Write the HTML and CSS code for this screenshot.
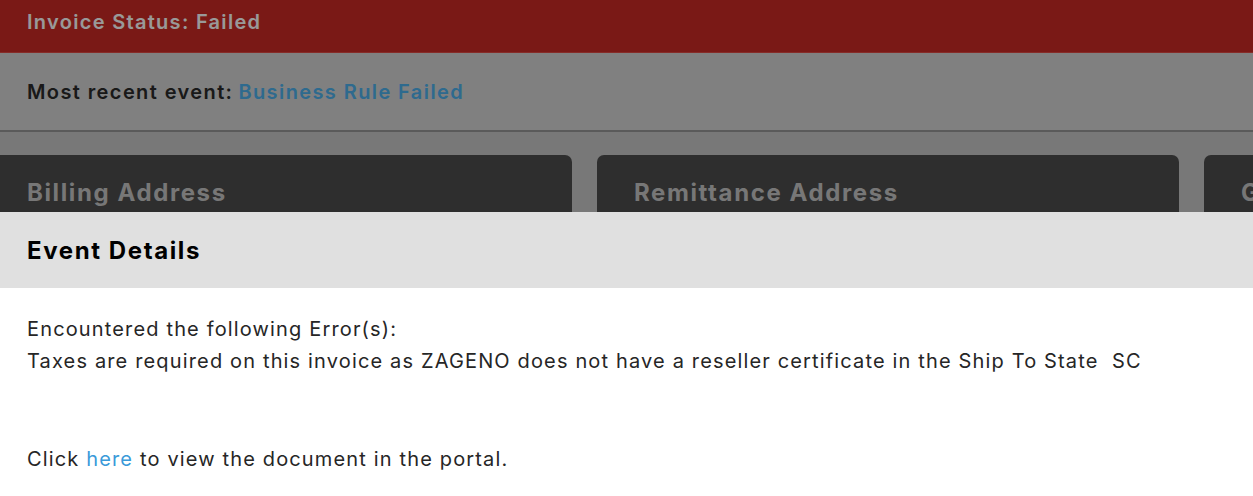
FILE: index.html
```html
<!DOCTYPE html>
<html lang="en">
<head>
<meta charset="utf-8">
<title>Invoice – Event Details</title>
<link rel="stylesheet" href="styles.css">
</head>
<body>
<div class="page">
  <header class="status-bar">Invoice Status: Failed</header>
  <section class="event-bar">
    <span class="event-label">Most recent event:</span>
    <a class="event-value" href="#">Business Rule Failed</a>
  </section>
  <section class="cards">
    <div class="card"><h2 class="card-title">Billing Address</h2></div>
    <div class="card"><h2 class="card-title">Remittance Address</h2></div>
    <div class="card"><h2 class="card-title">General</h2></div>
  </section>
</div>
<div class="backdrop"></div>
<div class="modal">
  <div class="modal-header"><h1 class="modal-title">Event Details</h1></div>
  <div class="modal-body">
    <p class="msg">Encountered the following Error(s):<br>Taxes are required on this invoice as ZAGENO does not have a reseller certificate in the Ship To State&nbsp; SC</p>
    <p class="msg link-line">Click <a class="link" href="#">here</a> to view the document in the portal.</p>
  </div>
</div>
</body>
</html>
```

FILE: styles.css
```css
* { box-sizing: border-box; }
html, body { margin: 0; padding: 0; height: 100%; overflow: hidden; }
body {
  font-family: Inter, "Open Sans", "Liberation Sans", sans-serif;
  background: #c8c8c8;
  width: 1253px;
  height: 496px;
  position: relative;
}
.page { display: flex; flex-direction: column; }
.status-bar {
  height: 53px;
  background: #cb2b25;
  border-bottom: 1px solid #e04a44;
  color: #ffffff;
  font-size: 20px;
  font-weight: 600;
  letter-spacing: 1.3px;
  line-height: 30px;
  padding: 7px 27px 0;
}
.event-bar {
  height: 79px;
  background: #d5d5d5;
  border-bottom: 2px solid #969696;
  display: flex;
  align-items: center;
  gap: 5px;
  padding: 0 27px;
  font-size: 20px;
  font-weight: 600;
  letter-spacing: 1.4px;
}
.event-label { color: #2b2b2b; }
.event-value { color: #4db1ed; text-decoration: none; }
.cards {
  display: flex;
  gap: 25px;
  margin: 23px 0 0 -10px;
}
.card {
  flex: 0 0 582px;
  height: 120px;
  background: #4d4d4d;
  border-radius: 7px;
  padding: 22px 37px 0;
  overflow: hidden;
}
.card-title {
  margin: 0;
  color: #c7c7c7;
  font-size: 24px;
  font-weight: 700;
  letter-spacing: 1.6px;
  line-height: 32px;
  white-space: nowrap;
}
.backdrop {
  position: absolute;
  inset: 0;
  background: rgba(0, 0, 0, 0.4);
}
.modal {
  position: absolute;
  top: 212px;
  left: 0;
  right: 0;
  bottom: 0;
  background: #ffffff;
  display: flex;
  flex-direction: column;
}
.modal-header {
  height: 76px;
  background: #e0e0e0;
  display: flex;
  align-items: center;
  padding: 0 27px;
}
.modal-title {
  margin: 0;
  font-size: 24px;
  font-weight: 700;
  letter-spacing: 1.6px;
  color: #000;
}
.modal-body { padding: 25px 27px 0; }
.msg {
  margin: 0;
  font-size: 20px;
  letter-spacing: 1.15px;
  line-height: 32px;
  color: #262626;
}
.link-line { margin-top: 66px; }
.link { color: #3a9ad9; text-decoration: none; }
```
